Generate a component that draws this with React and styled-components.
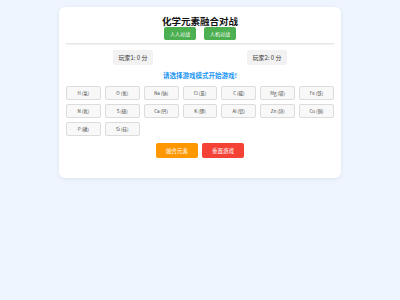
import React from "react";
import styled, { createGlobalStyle } from "styled-components";

const GlobalStyle = createGlobalStyle`
  html, body {
    margin: 0;
    padding: 0;
    background: #eef5fe;
    font-family: "Noto Sans CJK SC", "Noto Sans", "Liberation Sans", sans-serif;
  }
`;

const elements = [
  "H (氢)", "O (氧)", "Na (钠)", "Cl (氯)", "C (碳)", "Mg (镁)", "Fe (铁)",
  "N (氮)", "S (硫)", "Ca (钙)", "K (钾)", "Al (铝)", "Zn (锌)", "Cu (铜)",
  "P (磷)", "Si (硅)",
];

const Page = styled.div`
  width: 400px;
  height: 300px;
  padding-top: 7px;
  box-sizing: border-box;
`;

const Card = styled.div`
  width: 282px;
  margin: 0 auto;
  background: #fff;
  border-radius: 6px;
  box-shadow: 0 1px 4px rgba(0, 0, 0, 0.08);
  padding: 8px 7px 20px;
  box-sizing: border-box;
  display: flex;
  flex-direction: column;
  align-items: stretch;
`;

const Title = styled.h1`
  margin: 0;
  font-size: 9.5px;
  line-height: 12px;
  font-weight: 700;
  text-align: center;
  color: #111;
`;

const ModeRow = styled.div`
  display: flex;
  justify-content: center;
  gap: 8px;
`;

const Button = styled.button`
  border: none;
  border-radius: 2px;
  color: #fff;
  font-family: inherit;
  padding: 0;
  cursor: pointer;
  background: ${(p) => p.$bg};
  width: ${(p) => p.$w}px;
  height: ${(p) => p.$h}px;
  font-size: ${(p) => p.$fs}px;
`;

const Divider = styled.div`
  height: 1px;
  background: #e6e6e6;
  margin-top: 3px;
  box-shadow: 0 1px 0 #f2f2f2;
`;

const Scores = styled.div`
  display: flex;
  justify-content: space-around;
  margin-top: 6px;
`;

const Score = styled.div`
  width: 40px;
  height: 15px;
  background: #f2f2f2;
  border-radius: 2px;
  font-size: 6px;
  color: #333;
  display: flex;
  align-items: center;
  justify-content: center;
`;

const Message = styled.div`
  margin-top: 5px;
  line-height: 10px;
  font-size: 6.5px;
  font-weight: 700;
  color: #2196f3;
  text-align: center;
`;

const Grid = styled.div`
  display: grid;
  grid-template-columns: repeat(7, 1fr);
  gap: 4px;
  margin-top: 6px;
`;

const Element = styled.button`
  height: 14px;
  background: #f8f8f8;
  border: 1px solid #dcdcdc;
  border-radius: 2px;
  font-family: inherit;
  font-size: 4.5px;
  color: #444;
  padding: 0;
`;

const Actions = styled.div`
  display: flex;
  justify-content: center;
  gap: 4px;
  margin-top: 7px;
`;

export default function App() {
  return (
    <Page>
      <GlobalStyle />
      <Card>
        <Title>化学元素融合对战</Title>
        <ModeRow>
          <Button $bg="#4caf50" $w={32} $h={13} $fs={5}>人人对战</Button>
          <Button $bg="#4caf50" $w={32} $h={13} $fs={5}>人机对战</Button>
        </ModeRow>
        <Divider />
        <Scores>
          <Score>玩家1: 0 分</Score>
          <Score>玩家2: 0 分</Score>
        </Scores>
        <Message>请选择游戏模式开始游戏!</Message>
        <Grid>
          {elements.map((e) => (
            <Element key={e}>{e}</Element>
          ))}
        </Grid>
        <Actions>
          <Button $bg="#ff9800" $w={42} $h={15} $fs={5.5}>融合元素</Button>
          <Button $bg="#f44336" $w={42} $h={15} $fs={5.5}>重置游戏</Button>
        </Actions>
      </Card>
    </Page>
  );
}
